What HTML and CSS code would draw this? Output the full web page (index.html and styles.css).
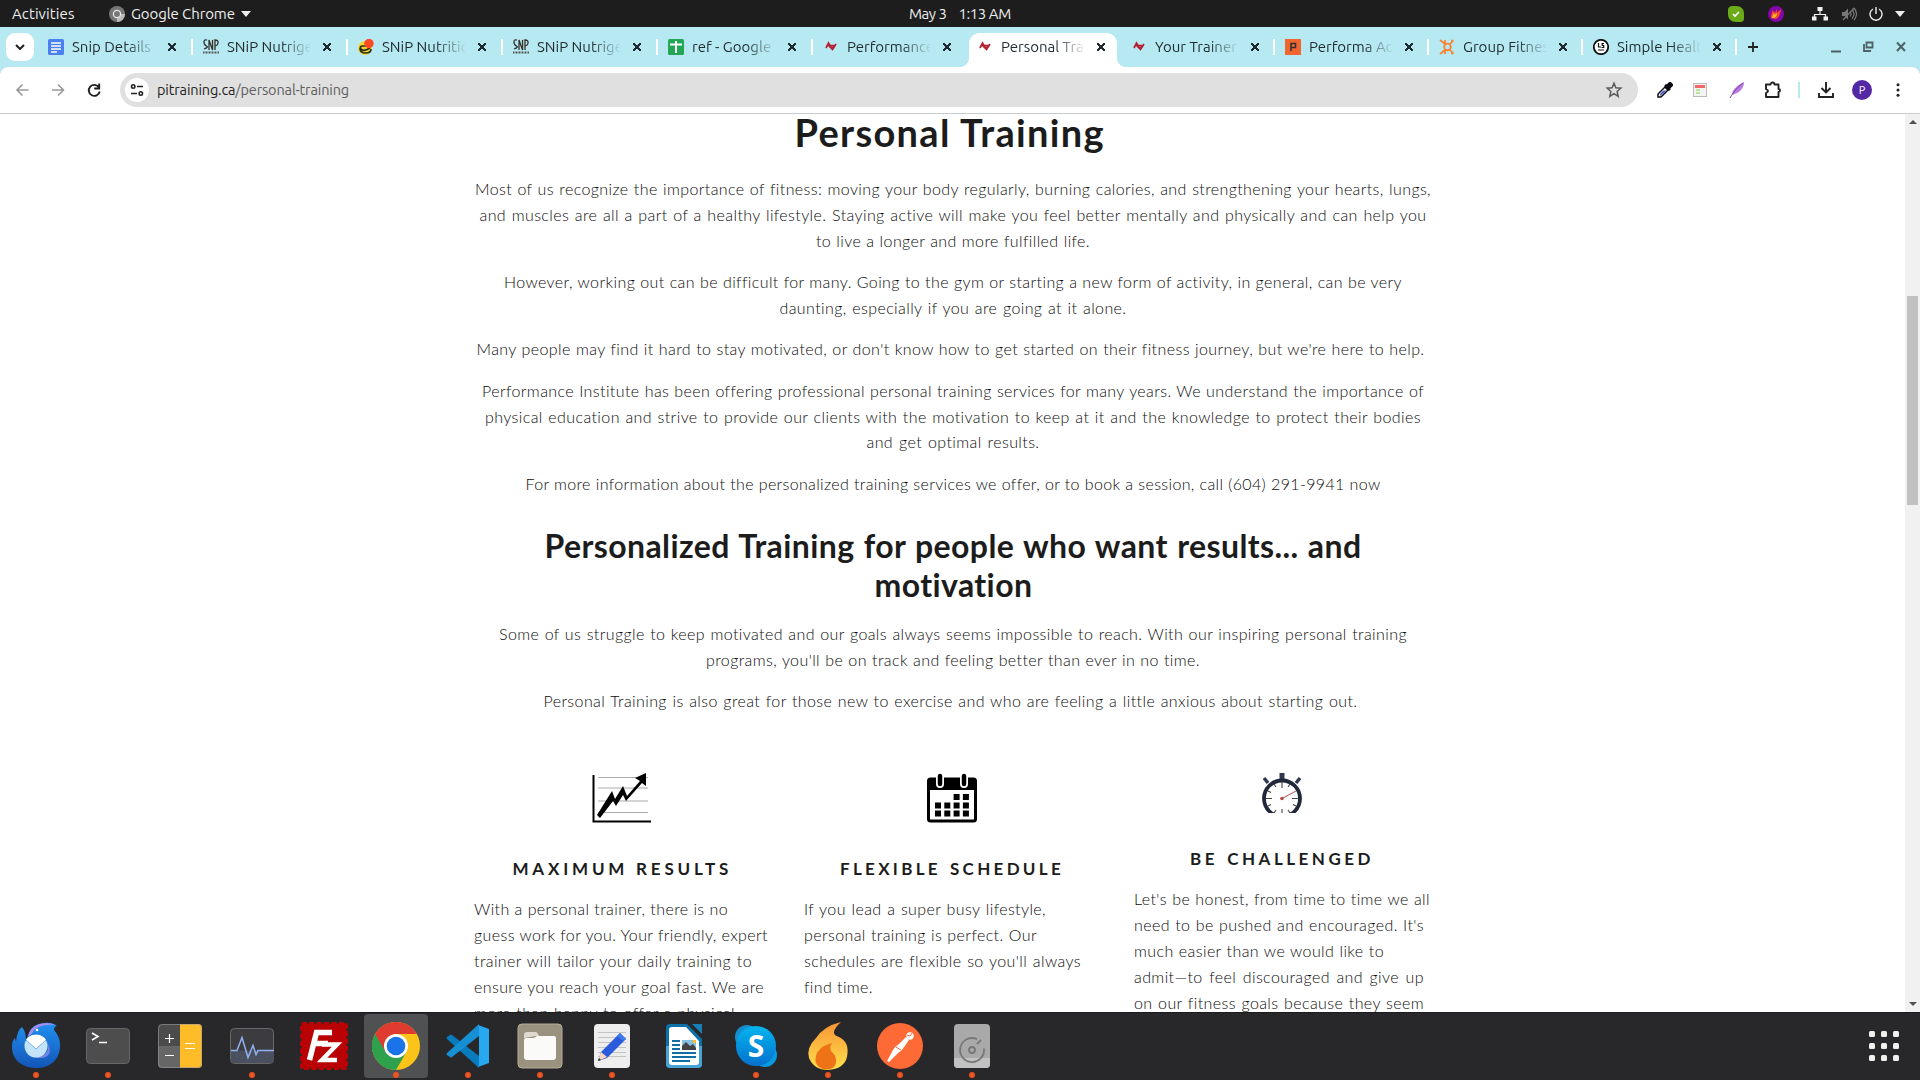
FILE: index.html
```html
<!DOCTYPE html>
<html lang="en">
<head>
<meta charset="utf-8">
<title>Personal Training</title>
<link rel="stylesheet" href="styles.css">
</head>
<body>
<header class="topbar">
  <span class="activities">Activities</span>
  <svg class="appicon" width="16" height="16" viewBox="0 0 16 16"><circle cx="8" cy="8" r="8" fill="#777"/><path d="M8 8h8a8 8 0 0 1-8 8z" fill="#bbb"/><circle cx="8" cy="8" r="3.6" fill="#777" stroke="#e8e8e8" stroke-width="1.3"/></svg>
  <span class="appname">Google Chrome</span>
  <svg width="10" height="6" viewBox="0 0 10 6"><path d="M0 0h10L5 6z" fill="#eee"/></svg>
  <span class="clock"><span>May 3</span><span>1:13 AM</span></span>
  <div class="tray">
    <svg class="t1" width="16" height="16" viewBox="0 0 16 16"><path d="M4.5 0h3.6c5 0 7.9 3.500 7.900 7.500v5c0 2.300-1.300 3.500-3.500 3.500H8C3 16 0 12.500 0 8.500V4C0 1.500 2 0 4.500 0z" fill="#6bab17"/><path d="M5 8l2 2 4-4" fill="none" stroke="#fff" stroke-width="1.600"/></svg>
    <svg class="t2" width="16" height="16" viewBox="0 0 16 16"><circle cx="8" cy="8" r="8" fill="#8405a8"/><path d="M3 12c0-4 1-4 1.500-8L7 7l2-4v4l4-4c-.5 5-2 9-6 10z" fill="#f94b2a"/><path d="M4 12c1-3 1-3 2-5l1 2 2-2c0 3-2 5-5 5z" fill="#fdbf26"/></svg>
    <svg class="t3" width="16" height="14" viewBox="0 0 16 14" fill="#f2f2f2"><path d="M5.500 0h5v4h-5zM0 9.500h4.500v4H0zM11.500 9.500H16v4h-4.500zM7.400 4h1.200v3h5.500v3h-1.200V8H3.100v2H1.900V7h5.500z"/></svg>
    <svg class="t4" width="16" height="16" viewBox="0 0 16 16"><path d="M1 6h2.500L7 2.500v11L3.500 10H1z" fill="#777"/><path d="M9 5.500q2 2.500 0 5M11 3.500q4 4.500 0 9M13 2q5 6 0 12M2 14L13 2" fill="none" stroke="#777" stroke-width="1.200"/></svg>
    <svg class="t5" width="14" height="14" viewBox="0 0 14 14" fill="none" stroke="#eee" stroke-width="1.400"><path d="M4 2a6 6 0 1 0 6 0M7 0v7"/></svg>
    <svg class="t6" width="10" height="6" viewBox="0 0 10 6"><path d="M0 0h10L5 6z" fill="#eee"/></svg>
  </div>
</header>

<nav class="tabs">
  <span class="search"><svg width="10" height="6" viewBox="0 0 10 6"><path d="M1 1l4 4 4-4" fill="none" stroke="#1f1f1f" stroke-width="2"/></svg></span>
  <div class="tab wide"><svg class="fav" viewBox="0 0 16 16"><rect width="16" height="16" rx="1.500" fill="#4a80ef"/><path d="M3 4h10M3 7h10M3 10h10M3 13h6" stroke="#fff" stroke-width="1.500"/></svg><span class="name">Snip Details</span><b class="x"></b></div>
  <div class="tab wide"><svg class="fav" viewBox="0 0 16 16"><path d="M9 0h3v11H9z" fill="#b7d9c4"/><path d="M4 1.200Q1 0 1 3t2.500 4T1 10M6 11V1l3.500 10V1M12 11V1q3.500 0 3 3t-3 2.500" fill="none" stroke="#333" stroke-width="1.300"/><path d="M0 13.500h16" stroke="#555" stroke-width="2" stroke-dasharray="1 .5"/></svg><span class="name">SNiP Nutrige</span><b class="x"></b></div>
  <div class="tab wide"><svg class="fav" viewBox="0 0 16 16"><circle cx="7" cy="9" r="7" fill="#f9d531"/><path d="M12 7H5Q1 7 3 10q3 3 9-1M2 9q0 5 6 5 5 0 5-4" fill="none" stroke="#26301d" stroke-width="1.700"/><circle cx="11" cy="4.500" r="4.700" fill="#fb4a24"/></svg><span class="name">SNiP Nutritic</span><b class="x"></b></div>
  <div class="tab wide"><svg class="fav" viewBox="0 0 16 16"><path d="M9 0h3v11H9z" fill="#b7d9c4"/><path d="M4 1.200Q1 0 1 3t2.500 4T1 10M6 11V1l3.500 10V1M12 11V1q3.500 0 3 3t-3 2.500" fill="none" stroke="#333" stroke-width="1.300"/><path d="M0 13.500h16" stroke="#555" stroke-width="2" stroke-dasharray="1 .5"/></svg><span class="name">SNiP Nutrige</span><b class="x"></b></div>
  <div class="tab wide"><svg class="fav" viewBox="0 0 16 16"><rect width="16" height="16" rx="1.500" fill="#23a656"/><path d="M2 5.500h12M8 2v12" stroke="#fff" stroke-width="2"/></svg><span class="name">ref - Google</span><b class="x"></b></div>
  <div class="tab nosep"><svg class="fav" viewBox="0 0 16 16"><path d="M3 9l2.500-5 3 5 2-1M6 7l3.500 3.500L13 5M4.500 6.500H12" fill="none" stroke="#b61f31" stroke-width="1.700"/></svg><span class="name">Performance</span><b class="x"></b></div>
  <div class="tab active"><svg class="fav" viewBox="0 0 16 16"><path d="M3 9l2.500-5 3 5 2-1M6 7l3.500 3.500L13 5M4.500 6.500H12" fill="none" stroke="#b61f31" stroke-width="1.700"/></svg><span class="name">Personal Tra</span><b class="x"></b></div>
  <div class="tab"><svg class="fav" viewBox="0 0 16 16"><path d="M3 9l2.500-5 3 5 2-1M6 7l3.500 3.500L13 5M4.500 6.500H12" fill="none" stroke="#b61f31" stroke-width="1.700"/></svg><span class="name">Your Trainer</span><b class="x"></b></div>
  <div class="tab"><svg class="fav" viewBox="0 0 16 16"><rect width="16" height="16" fill="#f1652f"/><path d="M6 12V4.500h4.500v4H6" fill="none" stroke="#333" stroke-width="1.600"/></svg><span class="name">Performa Ac</span><b class="x"></b></div>
  <div class="tab"><svg class="fav" viewBox="0 0 16 16" fill="none" stroke="#fb8030"><circle cx="8.500" cy="8" r="3.300" stroke-width="1.800"/><path d="M1 1l5 4M1 15l5-4M6 5V1M6 11v4M11 5l2-2M11 11l2 2" stroke-width="1.700"/><path d="M12 2h2.500M12 14h2.500" stroke-width="2.500"/></svg><span class="name">Group Fitnes</span><b class="x"></b></div>
  <div class="tab"><svg class="fav" viewBox="0 0 16 16"><circle cx="8" cy="8" r="7.200" fill="#fff" stroke="#111" stroke-width="1.800"/><path d="M5.500 4v4H8M11 4.500H9.200v2h1.500v2H8.500M5 11h6" fill="none" stroke="#111" stroke-width="1.200"/></svg><span class="name">Simple Healt</span><b class="x"></b></div>
  <svg class="plus" width="12" height="12" viewBox="0 0 12 12"><path d="M1 6h10M6 1v10" stroke="#222" stroke-width="1.800"/></svg>
  <svg class="wins" width="76" height="12" viewBox="0 0 76 12" fill="none" stroke="#4d6064" stroke-width="2"><path d="M0 10.500h10"/><path d="M35.500 1.500h6v5h-6zM33 3v7h7" stroke-width="1.800"/><path d="M66 1.500l8 8.500M74 1.500L66 10"/></svg>
</nav>

<div class="toolbar">
  <svg class="nav" width="86" height="16" viewBox="0 0 86 16" fill="none" stroke-width="1.600"><path d="M13.500 8H2M7.500 2.500L2 8l5.500 5.500M37 8h11.500M43 2.500L48.500 8 43 13.500" stroke="#999"/><path d="M84 5.500a5.500 5.500 0 1 0 .7 4M84.200 1.500v5h-5" stroke="#1f1f1f" stroke-width="1.900"/></svg>
  <div class="url">
    <span class="tune"><svg width="14" height="12" viewBox="0 0 14 12" fill="none" stroke="#222" stroke-width="1.600"><circle cx="3.200" cy="2.500" r="1.700"/><circle cx="10.800" cy="9.500" r="1.700"/><path d="M7 2.500h6M1 9.500h6"/></svg></span>
    <span class="addr"><i>pitraining.ca</i>/personal-training</span>
    <svg class="star" width="18" height="18" viewBox="0 0 18 18"><path d="M9 2.200l1.900 4.600 4.900.4-3.700 3.200 1.100 4.900L9 12.700l-4.200 2.600 1.100-4.900L2.200 7.200l4.900-.4z" fill="none" stroke="#5a5a5a" stroke-width="1.500"/></svg>
  </div>
  <div class="ext">
    <svg class="e1" width="16" height="16" viewBox="0 0 16 16"><path d="M1 15v-3l7-7 3 3-7 7z" fill="#fff" stroke="#0b0b16" stroke-width="1.500"/><path d="M3 14v-2l3.500-3.500h3z" fill="#3d55c4"/><path d="M8 3l5 5M9 5l4-4 2 2-4 4z" stroke="#0b0b16" stroke-width="2.600"/></svg>
    <svg class="e2" width="14" height="14" viewBox="0 0 14 14"><rect x=".5" y=".5" width="13" height="13" fill="#f4f4f4" stroke="#bbb"/><path d="M2 3.500h10" stroke="#f36767" stroke-width="3"/><path d="M3 7h4M3 10h4" stroke="#a5db7c" stroke-width="1.500"/></svg>
    <svg class="e3" width="16" height="16" viewBox="0 0 16 16"><path d="M3 13C3 7 9 3 15 0c0 6-4 11-12 13z" fill="#b77ddc"/><path d="M1 16C5 9 9 5 14 1" stroke="#7b3cab" fill="none"/></svg>
    <svg class="e4" width="18" height="18" viewBox="0 0 18 18"><path d="M2 3.500h4.500a2 2 0 0 1 4 0H14.500V8a1.500 1.500 0 0 1 0 3v5H2v-4q4-2 0-4z" fill="none" stroke="#222" stroke-width="1.900" stroke-linejoin="round"/></svg>
    <span class="bar"></span>
    <svg class="e5" width="16" height="16" viewBox="0 0 16 16" fill="none" stroke="#222" stroke-width="1.900"><path d="M8 0v10M3.500 6L8 10.500 12.500 6M1 11v4h14v-4"/></svg>
    <span class="avatar">P</span>
    <svg class="e6" width="4" height="14" viewBox="0 0 4 14" fill="#222"><circle cx="2" cy="1.800" r="1.500"/><circle cx="2" cy="7" r="1.500"/><circle cx="2" cy="12.200" r="1.500"/></svg>
  </div>
</div>

<main class="view">
  <article class="page">
    <h1><span>Personal Training</span></h1>
    <div class="intro">
      <p><span>Most of us recognize the importance of fitness: moving your body regularly, burning calories, and strengthening your hearts, lungs,</span> <span>and muscles are all a part of a healthy lifestyle. Staying active will make you feel better mentally and physically and can help you</span> <span>to live a longer and more fulfilled life.</span></p>
      <p><span>However, working out can be difficult for many. Going to the gym or starting a new form of activity, in general, can be very</span> <span>daunting, especially if you are going at it alone.</span></p>
      <p class="tail"><span>Many people may find it hard to stay motivated, or don't know how to get started on their fitness journey, but we're here to help.</span></p>
      <p><span>Performance Institute has been offering professional personal training services for many years. We understand the importance of</span> <span>physical education and strive to provide our clients with the motivation to keep at it and the knowledge to protect their bodies</span> <span>and get optimal results.</span></p>
      <p><span>For more information about the personalized training services we offer, or to book a session, call (604) 291-9941 now</span></p>
    </div>
    <h2><span>Personalized Training for people who want results... and</span> <span>motivation</span></h2>
    <div class="more">
      <p><span>Some of us struggle to keep motivated and our goals always seems impossible to reach. With our inspiring personal training</span> <span>programs, you'll be on track and feeling better than ever in no time.</span></p>
      <p class="tail"><span>Personal Training is also great for those new to exercise and who are feeling a little anxious about starting out.</span></p>
    </div>
    <div class="cols">
      <section>
        <svg class="pic" width="60" height="50" viewBox="0 0 60 50"><path d="M6 4.500h50M6 15h50M6 28h50M6 39.500h50" stroke="#aaa"/><path d="M1.500 2v46.500H59" fill="none" stroke="#000" stroke-width="2"/><path d="M5 42L20 18l3 8 8-13 4 10L48 8l-5-3L54 0v13l-4-3-16 18-3-6-7 11-3-5L8 45z"/></svg>
        <h3><span>MAXIMUM RESULTS</span></h3>
        <p><span>With a personal trainer, there is no</span> <span>guess work for you. Your friendly, expert</span> <span>trainer will tailor your daily training to</span> <span>ensure you reach your goal fast. We are</span> <span>more than happy to offer a physical</span></p>
      </section>
      <section>
        <svg class="pic" width="50" height="50" viewBox="0 0 50 50"><path d="M1.500 17V7q0-1.500 2-1.500h43q2 0 2 1.500v10z"/><rect x="1.500" y="6" width="47" height="42" rx="2" fill="none" stroke="#000" stroke-width="3"/><path d="M13 2v9M37 2v9" stroke="#fff" stroke-width="8" stroke-linecap="round"/><path d="M13 3v8M37 3v8" stroke="#000" stroke-width="4.500" stroke-linecap="round"/><path d="M26.600 24h16M8 32.500h34M8 40.500h34" stroke="#000" stroke-width="6" stroke-dasharray="6 3.300"/></svg>
        <h3><span>FLEXIBLE SCHEDULE</span></h3>
        <p><span>If you lead a super busy lifestyle,</span> <span>personal training is perfect. Our</span> <span>schedules are flexible so you'll always</span> <span>find time.</span></p>
      </section>
      <section>
        <svg class="pic" width="40" height="40" viewBox="0 0 40 40"><path d="M17.500 0h5v7h-5z" fill="#30384e"/><path d="M2 5l4 5M38 5l-4 5" stroke="#30384e" stroke-width="3.500"/><circle cx="20" cy="25.500" r="18" fill="#fff" stroke="#20283a" stroke-width="3.800"/><path d="M20 9v6M20 36v4M4 25.500h6M30 25.500h6M28 11l-2 3M12 11l2 3M6 18l3 1.500M6 33l3-1.500M34 33l-3-1.500M12 40l2-3M28 40l-2-3" stroke="#444" stroke-width="1.100"/><path d="M20 25.500L34 18" stroke="#b05050"/><circle cx="20" cy="25.500" r="1.800" fill="#b8474b"/></svg>
        <h3><span>BE CHALLENGED</span></h3>
        <p><span>Let's be honest, from time to time we all</span> <span>need to be pushed and encouraged. It's</span> <span>much easier than we would like to</span> <span>admit—to feel discouraged and give up</span> <span>on our fitness goals because they seem</span></p>
      </section>
    </div>
  </article>
  <aside class="scroll"><i class="up"></i><b></b><i class="down"></i></aside>
</main>

<footer class="dock">
  <div class="app run"><svg viewBox="0 0 48 48"><defs><linearGradient id="tb" x1="0" y1="0" x2="0" y2="1"><stop offset="0" stop-color="#2290f0"/><stop offset="1" stop-color="#1256b8"/></linearGradient></defs><path d="M17 11Q20 2 32 1q8-1 13 3-3 0-3 4 7 8 6 18c-1 12-10 20-23 20C8 46 0 36 0 25c0-5 1-7 3-9l1 4Q5 8 10 5q4 5 4 13z" fill="url(#tb)"/><path d="M16 14Q19 2 34 1q5 0 9 2-14-1-21 5-2 5-6 6z" fill="#a78bf0"/><path d="M36 22q2 12-13 13 10 3 14-3 2-5-1-10z" fill="#8c8cf0" opacity=".8"/><circle cx="24" cy="24" r="11.500" fill="#c3e3fb"/><path d="M14 18l10 9 10-9q-3-5-10-5t-10 5z" fill="#fff"/><path d="M14 18l10 9 10-9" fill="none" stroke="#79b3e8"/><circle cx="25" cy="8" r="1.300" fill="#fff"/></svg></div>
  <div class="app run"><svg viewBox="0 0 48 48"><rect x="2.500" y="6.500" width="43" height="35" rx="4" fill="#4d4d4d" stroke="#686868"/><path d="M8 11l6 3.500L8 18M15 20.500h8" fill="none" stroke="#fff" stroke-width="1.600"/></svg></div>
  <div class="app"><svg viewBox="0 0 48 48"><rect x="2" y="2" width="44" height="44" rx="4" fill="#4b4b4b"/><path d="M2 24h22v22H6q-4 0-4-4z" fill="#666"/><path d="M24 2h18q4 0 4 4v36q0 4-4 4H24z" fill="#febc28"/><path d="M9 16.500h9M13.500 12v9M9 33.500h9M29 21.500h10M29 26.500h10" stroke="#fff" stroke-width="1.200"/><rect x="2.500" y="2.500" width="43" height="43" rx="4" fill="none" stroke="#999" opacity=".6"/></svg></div>
  <div class="app run"><svg viewBox="0 0 48 48"><rect x="2.500" y="6.500" width="43" height="35" rx="4" fill="#3c3c40" stroke="#686868"/><path d="M3 28.500h43V38q0 3-4 3H6q-3 0-3-3z" fill="#4b5060"/><path d="M3 28.500h6l5-13 6 20 5-12 3 9 2-4h16" fill="none" stroke="#91b0ef" stroke-width="1.500"/></svg></div>
  <div class="app"><svg viewBox="0 0 48 48"><rect x="1.500" y="1.500" width="45" height="45" fill="#b80205" stroke="#b80205" stroke-width="3" stroke-dasharray="5 2.500"/><g fill="none" stroke="#fff" stroke-width="5.500"><path d="M32 10.500H16.500L9.500 38M14 21.500h14"/><path d="M22 22.500h15L22 38h15" stroke-width="4.500"/></g></svg></div>
  <div class="app run on"><svg viewBox="0 0 48 48"><circle cx="24" cy="24" r="24" fill="#fcc419"/><path d="M3.200 12a24 24 0 0 0 20.800 36l10.400-18-10.400 6z" fill="#2da14b"/><path d="M3.200 12L13.600 30 24 36V24z" fill="#2da14b"/><path d="M3.200 12a24 24 0 0 1 41.600 0H24L13.600 30z" fill="#e03b30"/><circle cx="24" cy="24" r="12" fill="#fff"/><circle cx="24" cy="24" r="9.300" fill="#1a73e8"/></svg></div>
  <div class="app run"><svg viewBox="0 0 48 48"><path d="M3 17q-1-1 0-2l3-2q1-1 2 0l27 21v12z" fill="#087bbd"/><path d="M3 31q-1 1 0 2l3 2q1 1 2 0l27-21V2z" fill="#1690d5"/><path d="M34 3l11 4v34l-11 4q1-1 1-3V6q0-2-1-3z" fill="#27a9f1"/></svg></div>
  <div class="app run"><svg viewBox="0 0 48 48"><rect x="2" y="2" width="44" height="44" rx="4" fill="#9a927e" stroke="#b5ad9a"/><path d="M8 16v-3q0-3 3-3h9q1 0 3 4h-3z" fill="#dedad0"/><path d="M8 18q0-2 2-2h7q2 0 4-2h17q2 0 2 2v19q0 3-3 3H11q-3 0-3-3z" fill="#fafaf9"/></svg></div>
  <div class="app run"><svg viewBox="0 0 48 48"><rect x="6" y="2" width="36" height="44" rx="4" fill="#eee"/><path d="M10 10.500h28M10 15.500h28M10 20.500h28M10 25.500h28M10 30.500h28M10 34.500h28" stroke="#c4c4c4"/><path d="M10 39l3-9L32 11l6 6-19 19z" fill="#2a5bdd"/><path d="M32 11l6 6-3 2-6-5z" fill="#3f77ec"/><path d="M10 39l3-9 6 5z" fill="#f8d8bd"/><path d="M10 39l1-3 2 2z" fill="#222"/></svg></div>
  <div class="app"><svg viewBox="0 0 48 48"><path d="M6 6q0-4 4-4h17l15 15v25q0 4-4 4H10q-4 0-4-4z" fill="#0c71a9"/><path d="M6 24h36v18q0 4-4 4H10q-4 0-4-4z" fill="#4aa3d5"/><path d="M9 8q0-3 3-3h14l13 14v21q0 3-3 3H12q-3 0-3-3z" fill="#fff"/><path d="M32 2h10v10z" fill="#1681b6"/><path d="M12 19h8M12 23h8M12 27h8M12 31h24M12 35h24M12 39h18" stroke="#126fa4" stroke-width="2"/><path d="M22 18h14v10H22z" fill="#86c0e4"/><path d="M22 28v-4l4-4 4 4 3-2 3 4v2z" fill="#444"/><path d="M33 18h3v3h-3z" fill="#fbbd27"/></svg></div>
  <div class="app run"><svg viewBox="0 0 48 48"><defs><linearGradient id="sk" x1="0" y1="0" x2="0" y2="1"><stop offset="0" stop-color="#03b5ee"/><stop offset="1" stop-color="#0571cf"/></linearGradient></defs><circle cx="15" cy="15" r="12" fill="#168dcf"/><circle cx="33" cy="33" r="12" fill="#0999df"/><circle cx="24" cy="24" r="20" fill="url(#sk)"/><text x="24" y="35" text-anchor="middle" font-size="30" font-weight="700" fill="#fff" font-family="Open Sans, sans-serif">S</text></svg></div>
  <div class="app run"><svg viewBox="0 0 48 48"><defs><linearGradient id="fl" x1="0" y1="0" x2="0" y2="1"><stop offset="0" stop-color="#f99436"/><stop offset="1" stop-color="#ffe04b"/></linearGradient></defs><path d="M37 0Q20 4 12 16 2 26 5 36q5 12 19 12 16-1 19-13 3-15-8-20-11-3 2-15z" fill="url(#fl)"/><path d="M28 21q-10 2-15 10-4 9 2 14 8 5 15 0 5-8-1-14-5-4-1-10z" fill="#ee7317"/></svg></div>
  <div class="app run"><svg viewBox="0 0 48 48"><circle cx="24" cy="24" r="23" fill="#fd6a35"/><path d="M30 15l3 3-7 10-4 3-9 9-2-1 5-9q2-5 7-8z" fill="#fff"/><path d="M20 25l5 3" stroke="#fd6a35"/><circle cx="34" cy="14" r="3.700" fill="#fff"/><path d="M31 13l3 1 2-3" fill="none" stroke="#fd6a35"/></svg></div>
  <div class="app run"><svg viewBox="0 0 48 48"><rect x="6" y="2" width="36" height="44" rx="4" fill="#a9a9a9"/><path d="M6 36h36v6q0 4-4 4H10q-4 0-4-4z" fill="#c2c2c2"/><path d="M29 17.100A12 12 0 1 0 36 26.500M29 22l4-4" fill="none" stroke="#777" stroke-width="1.800"/><circle cx="24" cy="28" r="3" fill="none" stroke="#777" stroke-width="1.800"/></svg></div>
  <div class="grid"><i></i><i></i><i></i><i></i><i></i><i></i><i></i><i></i><i></i></div>
</footer>
</body>
</html>
```
FILE: styles.css
```css
* { box-sizing: border-box; }
body {
  margin: 0;
  width: 1920px;
  height: 1080px;
  overflow: hidden;
  display: flex;
  flex-direction: column;
  background: #fff;
  font-family: Ubuntu, "Noto Sans", sans-serif;
  font-size: 15px;
}
svg { display: block; flex: none; }

/* desktop panel */
.topbar {
  position: relative;
  height: 27px;
  flex: none;
  display: flex;
  align-items: center;
  padding: 0 15px 0 12px;
  background: #1d1d1d;
  color: #eee;
}
.activities { width: 97px; letter-spacing: .1px; }
.appname { width: 105px; margin: 0 5px 0 6px; letter-spacing: -.1px; white-space: nowrap; }
.clock {
  position: absolute;
  left: 909px;
  display: flex;
  gap: 12px;
  letter-spacing: -.45px;
}
.tray { margin-left: auto; display: flex; align-items: center; }
.t2 { margin-left: 24px; }
.t3 { margin-left: 28px; }
.t4 { margin-left: 13px; }
.t5 { margin-left: 12px; }
.t6 { margin-left: 12px; }

/* tab strip */
.tabs {
  height: 40px;
  flex: none;
  display: flex;
  align-items: center;
  padding: 0 13px 0 6px;
  background: #b6e9f2;
  color: #1f2b2e;
}
.search {
  width: 28px;
  height: 28px;
  margin-right: 5px;
  border-radius: 9px;
  background: #fff;
  display: grid;
  place-items: center;
}
.tab {
  position: relative;
  width: 154px;
  height: 40px;
  flex: none;
  display: flex;
  align-items: center;
  padding-left: 9px;
}
.wide { width: 155px; }
.tab::after {
  content: "";
  position: absolute;
  right: 1px;
  top: 12px;
  width: 2px;
  height: 16px;
  background: #fff;
}
.nosep::after, .active::after { display: none; }
.fav { position: relative; width: 16px; height: 16px; z-index: 1; }
.name {
  position: relative;
  z-index: 1;
  width: 83px;
  margin-left: 8px;
  padding-bottom: 2px;
  overflow: hidden;
  white-space: nowrap;
  -webkit-mask-image: linear-gradient(90deg, #000 65%, transparent 102%);
  mask-image: linear-gradient(90deg, #000 65%, transparent 102%);
}
.x {
  position: relative;
  z-index: 1;
  width: 8px;
  height: 8px;
  margin-left: 13px;
  background:
    linear-gradient(45deg, transparent 41%, #1f2b2e 43% 57%, transparent 59%),
    linear-gradient(-45deg, transparent 41%, #1f2b2e 43% 57%, transparent 59%);
}
.active::before {
  content: "";
  position: absolute;
  left: -9px;
  top: 6px;
  width: 168px;
  height: 34px;
  background:
    radial-gradient(circle at 0 0, transparent 10px, #fff 10.500px) left bottom / 10px 10px no-repeat,
    radial-gradient(circle at 100% 0, transparent 10px, #fff 10.500px) right bottom / 10px 10px no-repeat,
    radial-gradient(circle at 10px 10px, #fff 9.500px, transparent 10px) 10px 0 / 10px 10px no-repeat,
    radial-gradient(circle at 0 10px, #fff 9.500px, transparent 10px) 148px 0 / 10px 10px no-repeat,
    linear-gradient(#fff, #fff) 20px 0 / 128px 10px no-repeat,
    linear-gradient(#fff, #fff) 10px 10px / 148px 24px no-repeat;
}
.plus { margin-left: 9px; }
.wins { margin-left: auto; }

/* address row */
.toolbar {
  height: 47px;
  flex: none;
  display: flex;
  align-items: center;
  padding: 0 20px 0 15px;
  background:
    radial-gradient(circle at 100% 100%, #fff 7.500px, #b6e9f2 8px) left top / 8px 8px no-repeat,
    radial-gradient(circle at 0 100%, #fff 7.500px, #b6e9f2 8px) right top / 8px 8px no-repeat,
    #fff;
  border-bottom: 1px solid #c9cccd;
}
.url {
  width: 1518px;
  height: 34px;
  margin-left: 19px;
  display: flex;
  align-items: center;
  padding: 0 15px 0 5px;
  border-radius: 17px;
  background: #e0e0e0;
}
.tune {
  width: 24px;
  height: 24px;
  border-radius: 50%;
  background: #fff;
  display: grid;
  place-items: center;
}
.addr { margin-left: 8px; padding-bottom: 1px; color: #5e5e5e; font-size: 14.500px; letter-spacing: -.15px; }
.addr i { font-style: normal; color: #1f1f1f; }
.star { margin-left: auto; }
.ext { flex: 1; display: flex; align-items: center; }
.e1 { margin-left: 19px; }
.e2 { margin-left: 20px; }
.e3 { margin-left: 22px; }
.e4 { margin-left: 19px; }
.bar { width: 2px; height: 16px; margin-left: 16px; background: #b6e9f2; }
.e5 { margin-left: 18px; }
.avatar {
  width: 20px;
  height: 20px;
  margin-left: 18px;
  border-radius: 50%;
  background: #5427a5;
  color: #fff;
  font-size: 11px;
  line-height: 20px;
  text-align: center;
}
.e6 { margin-left: 24px; }

/* web page */
.view { height: 898px; flex: none; display: flex; overflow: hidden; }
.page {
  width: 1905px;
  padding: 0 473px 0 474px;
  font-family: Lato, "Open Sans", sans-serif;
  font-weight: 300;
  font-size: 16px;
  line-height: 25.8px;
  letter-spacing: .4px;
  color: #0c0c0c;
}
.page p { margin: 0 0 15.700px; }
.page span {
  display: block;
  margin: 0 auto;
  white-space: nowrap;
  text-align: justify;
  text-align-last: justify;
}
h1, h2, h3 { color: #1c1c1c; font-weight: 700; }
h1 { margin: 0; font-size: 38px; line-height: 37px; letter-spacing: 1.300px; }
.page h1 span { width: 309px; position: relative; left: -4px; }
.intro { padding-top: 25px; }
.intro p:nth-child(1) span:nth-child(1) { width: 956px; letter-spacing: .38px; }
.intro p:nth-child(1) span:nth-child(2) { width: 947px; }
.intro p:nth-child(1) span:nth-child(3) { width: 274px; }
.intro p:nth-child(2) span:nth-child(1) { width: 898px; }
.intro p:nth-child(2) span:nth-child(2) { width: 347px; }
.intro p:nth-child(3) span { width: 948px; }
.intro p:nth-child(4) span:nth-child(1) { width: 942px; }
.intro p:nth-child(4) span:nth-child(2) { width: 936px; }
.intro p:nth-child(4) span:nth-child(3) { width: 173px; }
.intro p:nth-child(5) span { width: 855px; letter-spacing: .35px; }
.page .tail { padding-right: 5px; }
h2 { margin: 29px 0 17px; font-size: 32px; line-height: 39px; letter-spacing: .4px; }
h2 span:nth-child(1) { width: 817px; }
h2 span:nth-child(2) { width: 157px; }
.more p:nth-child(1) span:nth-child(1) { width: 908px; }
.more p:nth-child(1) span:nth-child(2) { width: 494px; }
.more p:nth-child(2) span { width: 814px; }
.cols { display: grid; grid-template-columns: repeat(3, 296px); gap: 34px; padding-top: 44px; }
.pic { margin: 0 auto; }
h3 { margin: 33px 0 14px; font-size: 17px; line-height: 26px; letter-spacing: 3.500px; }
.cols section:nth-child(1) h3 span { width: 219px; letter-spacing: 3.800px; }
.cols section:nth-child(2) h3 span { width: 224px; letter-spacing: 3.300px; }
.cols section:nth-child(3) h3 span { width: 184px; }
.page .cols p span { margin: 0; }
.cols section:nth-child(1) p span:nth-child(1) { width: 254px; }
.cols section:nth-child(1) p span:nth-child(2) { width: 294px; }
.cols section:nth-child(1) p span:nth-child(3) { width: 278px; }
.cols section:nth-child(1) p span:nth-child(4) { width: 290px; }
.cols section:nth-child(1) p span:nth-child(5) { width: 261px; }
.cols section:nth-child(2) p span:nth-child(1) { width: 242px; }
.cols section:nth-child(2) p span:nth-child(2) { width: 233px; }
.cols section:nth-child(2) p span:nth-child(3) { width: 277px; }
.cols section:nth-child(2) p span:nth-child(4) { width: 69px; }
.cols section:nth-child(3) p span:nth-child(1) { width: 296px; }
.cols section:nth-child(3) p span:nth-child(2) { width: 290px; }
.cols section:nth-child(3) p span:nth-child(3) { width: 250px; }
.cols section:nth-child(3) p span:nth-child(4) { width: 290px; }
.cols section:nth-child(3) p span:nth-child(5) { width: 290px; }

.scroll {
  width: 15px;
  display: flex;
  flex-direction: column;
  align-items: center;
  padding: 6px 0;
  background: #f1f1f1;
}
.scroll i { border: 4px solid transparent; }
.scroll .up { border-top: 0; border-bottom-color: #505050; }
.scroll .down { border-bottom: 0; border-top-color: #505050; margin-top: auto; }
.scroll b { width: 11px; height: 209px; margin-top: 172px; background: #c1c1c1; }

/* launcher */
.dock {
  height: 68px;
  flex: none;
  display: flex;
  align-items: center;
  gap: 8px;
  padding: 0 21px 0 4px;
  background: #28282a;
  box-shadow: inset 0 1px #1b1b1d;
}
.app {
  position: relative;
  width: 64px;
  height: 64px;
  padding: 8px;
  border-radius: 4px;
}
.on { background: #505153; }
.run::after {
  content: "";
  position: absolute;
  left: 29px;
  bottom: 0;
  width: 6px;
  height: 6px;
  border-radius: 50%;
  background: #e95420;
}
.grid {
  margin-left: auto;
  display: grid;
  grid-template-columns: repeat(3, 6px);
  gap: 6px;
}
.grid i { height: 6px; border-radius: 1.500px; background: #f0f0ee; }
```
